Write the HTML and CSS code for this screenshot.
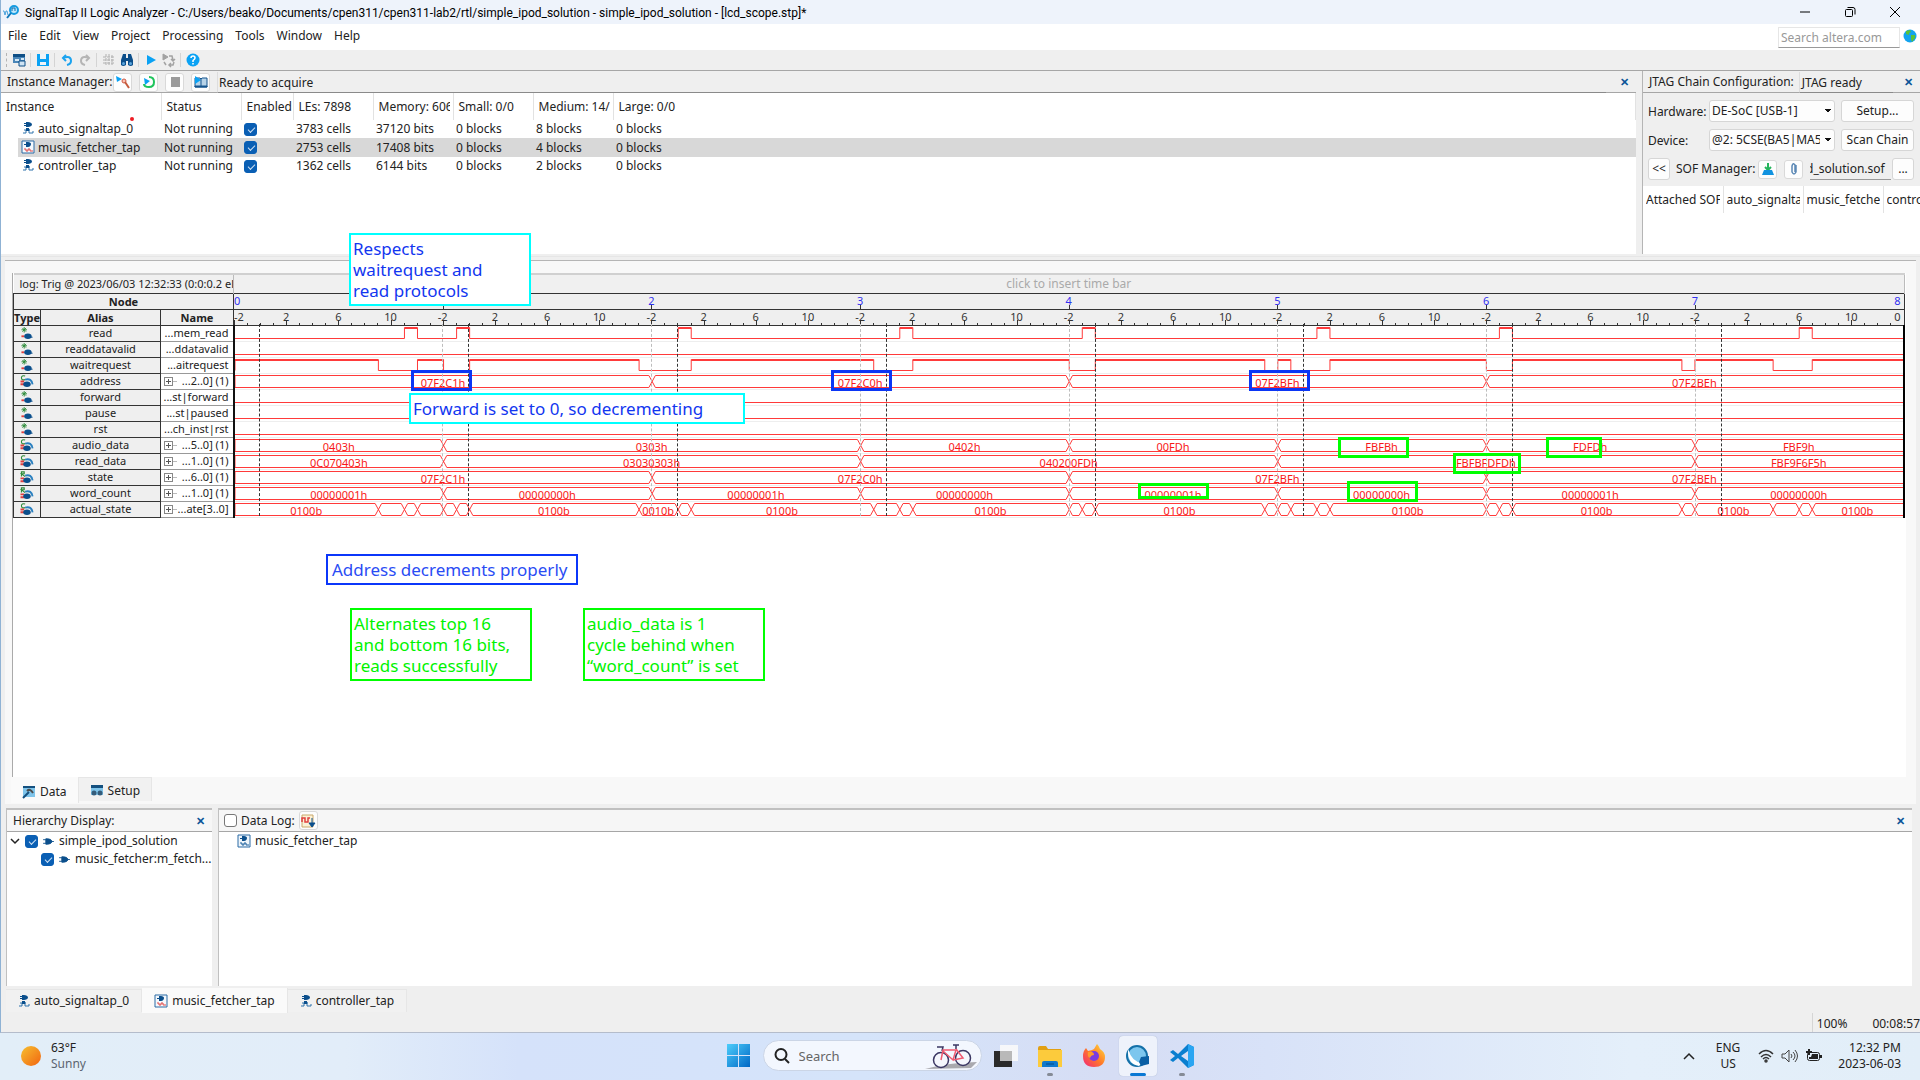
FILE: index.html
```html
<!DOCTYPE html>
<html lang="en">
<head>
<meta charset="utf-8">
<title>SignalTap II Logic Analyzer</title>
<link rel="stylesheet" href="styles.css">
</head>
<body>
<svg class="defs" aria-hidden="true">
  <symbol id="i-tap" viewBox="0 0 12 14"><path d="M4 1h2c2 0 4 1 4 2.500S8 6 6 6H4V5H2V4h2V3H2V2h2z" fill="#0b4f8c"/><path d="M1 12h3V9H2M4 9l4 0M7 8v4h4v-2" fill="none" stroke="#2f72ab" stroke-width="1"/><path d="M4 7h3v3H4z" fill="#0b4f8c"/></symbol>
  <symbol id="i-tapbox" viewBox="0 0 14 14"><path d="M1 1h12v12H1z" fill="#f4f8fc" stroke="#2a6aa5"/><path d="M5 2h2c2 0 3 1 3 2s-1 3-3 3H5V5H3V4h2z" fill="#0b4f8c"/><path d="M3 9h2v2h2V9h2v2h3" fill="none" stroke="#e04848"/></symbol>
  <symbol id="i-tapblue" viewBox="0 0 14 14"><path d="M1 1h12v12H1z" fill="#eef5fb" stroke="#2a6aa5"/><path d="M5 2h2c2 0 3 1 3 2s-1 3-3 3H5V5H3V4h2z" fill="#0b4f8c"/><path d="M3 9h2v2h2V9h2v2h3" fill="none" stroke="#1b5f9b"/></symbol>
  <symbol id="i-node" viewBox="0 0 12 14"><path d="M1 1l4 4M5 1L1 5M3 0v6M0 3h6" stroke="#2e8b3a" stroke-width="1"/><path d="M0 10h3" stroke="#e04040" stroke-width="2"/><ellipse cx="7" cy="10" rx="4" ry="3" fill="#0b4f8c"/><path d="M10 11h2" stroke="#0b4f8c"/></symbol>
  <symbol id="i-bus" viewBox="0 0 14 14"><path d="M5 1Q1 0 1 3t4 2" fill="none" stroke="#2e8b3a" stroke-width="1.200"/><path d="M0 7h4M0 10h4" stroke="#e04040" stroke-width="2"/><ellipse cx="7" cy="10" rx="4" ry="3" fill="#0b4f8c"/><path d="M5 5q7-2 8 5" fill="none" stroke="#2a80c0" stroke-width="2"/></symbol>
  <symbol id="i-reg" viewBox="0 0 14 14"><path d="M1 6V1h3v2H1l4 3" fill="none" stroke="#2e8b3a" stroke-width="1.200"/><path d="M0 8h4M0 11h4" stroke="#e04040" stroke-width="2"/><ellipse cx="7" cy="10" rx="4" ry="3" fill="#0b4f8c"/><path d="M5 5q7-2 8 5" fill="none" stroke="#2a80c0" stroke-width="2"/></symbol>
  <symbol id="i-plug" viewBox="0 0 12 10"><path d="M3 2h2q4 0 5 3-1 3-5 3H3zM0 3h3M0 7h3M10 5h2" fill="#0b4f8c" stroke="#0b4f8c"/></symbol>
</svg>
<div class="app">
  <header class="titlebar">
    <svg width="16" height="14" viewBox="0 0 16 14"><path d="M0 6h1l1 4 1-4h1l1 4" fill="none" stroke="#49a2dc"/><circle cx="11" cy="5" r="4" fill="#bfe7fb" stroke="#169be0" stroke-width="2"/><path d="M9 6V3h3v3" fill="none" stroke="#0b6cb0"/><path d="M8 8l-4 5" stroke="#0f78ba" stroke-width="2"/></svg>
    <h1>SignalTap II Logic Analyzer - C:/Users/beako/Documents/cpen311/cpen311-lab2/rtl/simple_ipod_solution - simple_ipod_solution - [lcd_scope.stp]*</h1>
    <div class="winbtns">
      <button aria-label="Minimize"><svg width="12" height="12"><path d="M1 6h10" stroke="#000"/></svg></button>
      <button aria-label="Restore"><svg width="12" height="12" fill="none" stroke="#000"><rect x="1.500" y="3.500" width="7" height="7" rx="1"/><path d="M3.500 1.500H9q2 0 2 2v5"/></svg></button>
      <button aria-label="Close"><svg width="12" height="12"><path d="M1 1l10 10M11 1L1 11" stroke="#000"/></svg></button>
    </div>
  </header>
  <nav class="menubar">
    <a href="#">File</a><a href="#">Edit</a><a href="#">View</a><a href="#">Project</a><a href="#">Processing</a><a href="#">Tools</a><a href="#">Window</a><a href="#">Help</a>
    <input class="site-search" type="text" placeholder="Search altera.com" aria-label="Search altera.com">
    <svg width="14" height="14" viewBox="0 0 14 14"><circle cx="7" cy="7" r="6.500" fill="#13a3ee"/><path d="M3 2l4-1 1 2-2 1 0 2-3-1zM8 6l4 0 0 3-3 4-1-3z" fill="#5bc236"/></svg>
  </nav>
  <div class="toolbar">
    <i class="grip"></i>
    <button aria-label="Instance"><svg width="14" height="14"><path d="M1 1h12v9H1z" fill="#4a86b8"/><path d="M1 1h12v3H1z" fill="#0f4f86"/><path d="M3 6h4v2H3zM9 5h3v2H9z" fill="#d6e8f5"/><path d="M7 8h6v5H7z" fill="#cfe3f3" stroke="#0f4f86"/></svg></button>
    <i></i>
    <button aria-label="Save"><svg width="14" height="14"><path d="M1 1h12v12H1z" fill="#0aa2f4"/><path d="M4 1h6v5H4zM4 9h6v3H4z" fill="#eef4f8"/></svg></button>
    <i></i>
    <button aria-label="Undo"><svg width="14" height="14" fill="none" stroke="#1ba3ef" stroke-width="2"><path d="M3 5q8-3 8 3 0 3-4 4"/><path d="M6 2L3 5l3 3"/></svg></button>
    <button aria-label="Redo"><svg width="14" height="14" fill="none" stroke="#b5b5b5" stroke-width="2"><path d="M11 5Q3 2 3 8q0 3 4 4"/><path d="M8 2l3 3-3 3"/></svg></button>
    <i></i>
    <button aria-label="Nodes"><svg width="14" height="14" stroke="#b0b0b0"><path d="M1 4h12M1 7h12M1 10h12M4 1v12M7 1v12M10 2v10" fill="none" stroke-dasharray="3 1"/></svg></button>
    <button aria-label="Find"><svg width="14" height="14" fill="#0d4f8b"><path d="M3 1h3v4h2V1h3l2 6v5q-2 2-5 0V8H6v4q-3 2-5 0V7z"/><circle cx="3.500" cy="10.500" r="1.500" fill="#5ba5dc"/><circle cx="10.500" cy="10.500" r="1.500" fill="#5ba5dc"/></svg></button>
    <i></i>
    <button aria-label="Run"><svg width="14" height="14"><path d="M3 2l9 5-9 5z" fill="#0aa2f4"/></svg></button>
    <button aria-label="Analyze"><svg width="14" height="14" fill="none" stroke="#a3a3a3"><path d="M1 1l5 3-5 3z" fill="#a3a3a3"/><path d="M7 3h3l1 4M9 6l2 2 2-2M12 9l-1 3H7M9 10l-2 2 2 2M4 12L2 9" stroke-width="1.500"/></svg></button>
    <i></i>
    <button aria-label="Help"><svg width="14" height="14"><circle cx="7" cy="7" r="6.500" fill="#0aa2f4"/><path d="M5 5q0-2 2-2t2 2q0 1-2 2.500V9M7 10v1.500" fill="none" stroke="#fff" stroke-width="1.500"/></svg></button>
  </div>

  <div class="upper">
    <section class="instances">
      <div class="phead">
        <span>Instance Manager:</span>
        <button class="tb" aria-label="Run analysis"><svg width="14" height="14"><path d="M0 1l6 3-5 3z" fill="#0aa2f4"/><circle cx="8" cy="6" r="2" fill="#f9c0b0" stroke="#cf5a44"/><path d="M9 7l4 6" stroke="#c55a3c" stroke-width="2"/></svg></button>
        <button class="tb" aria-label="Autorun"><svg width="14" height="14"><path d="M7 2q5 0 5 5t-5 5-5-3" fill="none" stroke="#1fc45c" stroke-width="2"/><path d="M2 3l6 3-5 4z" fill="#0aa2f4"/></svg></button>
        <button class="tb" aria-label="Stop" disabled><svg width="14" height="14"><path d="M3 2h9v10H3z" fill="#9b9b9b"/></svg></button>
        <button class="tb" aria-label="Read data"><svg width="14" height="14"><path d="M1 3h5l1 1 1-1h5v9H1z" fill="#b7d3e8" stroke="#14558e"/><path d="M1 11h12v1H1z" fill="#14558e" stroke="#14558e"/><path d="M1 1l6 4-6 4z" fill="#0aa2f4"/><path d="M7 4v8" stroke="#14558e"/></svg></button>
        <span class="sunk grow">Ready to acquire</span>
        <button class="close" aria-label="Close panel">✕</button>
      </div>
      <table class="itable">
        <colgroup><col class="w161"><col class="w80"><col class="w52"><col class="w80"><col class="w80"><col class="w80"><col class="w80"><col></colgroup>
        <thead><tr><th>Instance</th><th>Status</th><th>Enabled</th><th>LEs: 7898</th><th><div>Memory: 606</div></th><th>Small: 0/0</th><th><div>Medium: 14/3</div></th><th>Large: 0/0</th></tr></thead>
        <tbody>
          <tr><td><svg width="12" height="14"><use href="#i-tap"/></svg>auto_signaltap_0</td><td>Not running</td><td><input type="checkbox" checked aria-label="Enable auto_signaltap_0"></td><td>3783 cells</td><td>37120 bits</td><td>0 blocks</td><td>8 blocks</td><td>0 blocks</td></tr>
          <tr class="sel"><td><svg width="14" height="14"><use href="#i-tapbox"/></svg>music_fetcher_tap</td><td>Not running</td><td><input type="checkbox" checked aria-label="Enable music_fetcher_tap"></td><td>2753 cells</td><td>17408 bits</td><td>0 blocks</td><td>4 blocks</td><td>0 blocks</td></tr>
          <tr><td><svg width="12" height="14"><use href="#i-tap"/></svg>controller_tap</td><td>Not running</td><td><input type="checkbox" checked aria-label="Enable controller_tap"></td><td>1362 cells</td><td>6144 bits</td><td>0 blocks</td><td>2 blocks</td><td>0 blocks</td></tr>
        </tbody>
      </table>
    </section>
    <section class="jtag">
      <div class="phead"><span>JTAG Chain Configuration:</span><span class="sunk ready">JTAG ready</span><button class="close" aria-label="Close panel">✕</button></div>
      <div class="jform">
        <label for="hw">Hardware:</label>
        <select id="hw"><option>DE-SoC [USB-1]</option></select>
        <button class="btn">Setup...</button>
        <label for="dev">Device:</label>
        <select id="dev"><option>@2: 5CSE(BA5|MA5)</option></select>
        <button class="btn">Scan Chain</button>
      </div>
      <div class="jsof">
        <button class="btn sq">&lt;&lt;</button>
        <label for="sof">SOF Manager:</label>
        <button class="tb" aria-label="Program"><svg width="14" height="14"><path d="M7 1v6M4 5l3 3 3-3" stroke="#24b45c" stroke-width="2" fill="none"/><path d="M3 8h8l2 5H1z" fill="#1193e0"/></svg></button>
        <button class="tb" aria-label="Attach"><svg width="14" height="14"><path d="M9 3v7q-2 4-4 0V4q1-4 3-1v7" fill="none" stroke="#5b88b5" stroke-width="1.500"/></svg></button>
        <span class="sofname"><input id="sof" type="text" value="d_solution.sof"></span>
        <button class="btn sq">...</button>
      </div>
      <table class="sofs"><thead><tr><th><div>Attached SOF</div></th><th><div>auto_signaltap</div></th><th><div>music_fetcher</div></th><th><div>controller</div></th></tr></thead></table>
    </section>
  </div>

  <main class="scope">
    <div class="viewer">
      <table class="waves">
        <colgroup><col class="c-type"><col class="c-alias"><col class="c-name"><col></colgroup>
        <thead>
          <tr class="log"><td colspan="3">log: Trig @ 2023/06/03 12:32:33 (0:0:0.2 ela</td><td class="hint">click to insert time bar</td></tr>
          <tr class="dark"><th colspan="3">Node</th><td id="segments"></td></tr>
          <tr class="dark"><th>Type</th><th>Alias</th><th>Name</th><td id="ticks"></td></tr>
        </thead>
        <tbody>
          <tr><td><svg width="12" height="14"><use href="#i-node"/></svg></td><td>read</td><td>...mem_read</td><td data-high="13-14 17-18 34-35 51-52 65-66 83-84 97-98 120-121"></td></tr>
          <tr><td><svg width="12" height="14"><use href="#i-node"/></svg></td><td>readdatavalid</td><td>...ddatavalid</td><td data-high=""></td></tr>
          <tr><td><svg width="12" height="14"><use href="#i-node"/></svg></td><td>waitrequest</td><td>...aitrequest</td><td data-high="0-11 14-16 18-31 35-49 52-64 66-79 80-81 84-96 98-111 112-118 121-128"></td></tr>
          <tr class="bus"><td><svg width="14" height="14"><use href="#i-bus"/></svg></td><td>address</td><td>...2..0] (1)</td><td data-bus="0:07F2C1h 32:07F2C0h 64:07F2BFh 96:07F2BEh"></td></tr>
          <tr><td><svg width="12" height="14"><use href="#i-node"/></svg></td><td>forward</td><td>...st|forward</td><td data-high=""></td></tr>
          <tr><td><svg width="12" height="14"><use href="#i-node"/></svg></td><td>pause</td><td>...st|paused</td><td data-high=""></td></tr>
          <tr><td><svg width="12" height="14"><use href="#i-node"/></svg></td><td>rst</td><td>...ch_inst|rst</td><td data-high=""></td></tr>
          <tr class="bus"><td><svg width="14" height="14"><use href="#i-bus"/></svg></td><td>audio_data</td><td>...5..0] (1)</td><td data-bus="0:0403h 16:0303h 48:0402h 64:00FDh 80:FBFBh 96:FDFDh 112:FBF9h"></td></tr>
          <tr class="bus"><td><svg width="14" height="14"><use href="#i-bus"/></svg></td><td>read_data</td><td>...1..0] (1)</td><td data-bus="0:0C070403h 16:03030303h 48:040200FDh 80:FBFBFDFDh 112:FBF9F6F5h"></td></tr>
          <tr class="bus"><td><svg width="14" height="14"><use href="#i-reg"/></svg></td><td>state</td><td>...6..0] (1)</td><td data-bus="0:07F2C1h 32:07F2C0h 64:07F2BFh 96:07F2BEh"></td></tr>
          <tr class="bus"><td><svg width="14" height="14"><use href="#i-reg"/></svg></td><td>word_count</td><td>...1..0] (1)</td><td data-bus="0:00000001h 16:00000000h 32:00000001h 48:00000000h 64:00000001h 80:00000000h 96:00000001h 112:00000000h"></td></tr>
          <tr class="bus"><td><svg width="14" height="14"><use href="#i-bus"/></svg></td><td>actual_state</td><td>...ate[3..0]</td><td data-bus="0:0100b 11: 13: 14: 16: 17: 18:0100b 31:0010b 34: 35:0100b 49: 51: 52:0100b 64: 65: 66:0100b 79: 80: 81: 83: 84:0100b 96: 97: 98:0100b 111: 112:0100b 118: 120: 121:0100b"></td></tr>
        </tbody>
      </table>
      <div class="bars" id="bars"></div>
    </div>
    <div class="tabs">
      <button class="tab on"><svg width="14" height="14"><path d="M1 1h12v11H1z" fill="#7fc4ea"/><path d="M1 1h12v2H1z" fill="#14507f"/><path d="M1 13l6-6" stroke="#14507f" stroke-width="2"/><path d="M5 6q3-3 6 2" fill="none" stroke="#4d4d4d" stroke-width="2"/></svg>Data</button>
      <button class="tab"><svg width="14" height="14"><path d="M1 2h12v9H1z" fill="#7fc4ea"/><path d="M1 1h12v3H1z" fill="#14507f"/><circle cx="4" cy="9" r="2.500" fill="#355c7a"/><circle cx="10" cy="9" r="2.500" fill="#355c7a"/></svg>Setup</button>
    </div>
  </main>

  <div class="lower">
    <section class="hier">
      <div class="phead"><span class="grow">Hierarchy Display:</span><button class="close" aria-label="Close panel">✕</button></div>
      <ul class="tree">
        <li><svg width="10" height="10"><path d="M1 3l4 4 4-4" fill="none" stroke="#222" stroke-width="1.500"/></svg><input type="checkbox" id="h1" checked><svg width="11" height="9"><use href="#i-plug"/></svg><label for="h1">simple_ipod_solution</label></li>
        <li class="child"><input type="checkbox" id="h2" checked><svg width="11" height="9"><use href="#i-plug"/></svg><label for="h2">music_fetcher:m_fetch...</label></li>
      </ul>
    </section>
    <section class="dlog">
      <div class="phead"><input type="checkbox" id="dl"><label for="dl">Data Log:</label>
        <button class="tb" aria-label="Log"><svg width="14" height="14"><path d="M1 1h11v12H1z" fill="#fbf1d6" stroke="#c9a86a"/><path d="M1 8V4h3v4h3V4h2" fill="none" stroke="#e04040" stroke-width="1.500"/><path d="M11 4v6M8 9l3 4 3-4z" stroke="#0b4f8c" fill="#0b4f8c"/></svg></button>
        <span class="grow"></span><button class="close" aria-label="Close panel">✕</button></div>
      <ul class="tree log-tree"><li><svg width="14" height="14"><use href="#i-tapblue"/></svg><span>music_fetcher_tap</span></li></ul>
    </section>
  </div>
  <div class="tabs filetabs">
    <button class="tab"><svg width="12" height="14"><use href="#i-tap"/></svg>auto_signaltap_0</button>
    <button class="tab on"><svg width="14" height="14"><use href="#i-tapbox"/></svg>music_fetcher_tap</button>
    <button class="tab"><svg width="12" height="14"><use href="#i-tap"/></svg>controller_tap</button>
  </div>
  <footer class="status"><span class="pct">100%</span><span>00:08:57</span></footer>

  <i class="dot"></i>
  <p class="note cyan n1">Respects<br>waitrequest and<br>read protocols</p>
  <p class="note cyan n2">Forward is set to 0, so decrementing</p>
  <p class="note blue n3">Address decrements properly</p>
  <p class="note green n4">Alternates top 16<br>and bottom 16 bits,<br>reads successfully</p>
  <p class="note green n5">audio_data is 1<br>cycle behind when<br>“word_count” is set</p>
  <i class="mark m1"></i><i class="mark m2"></i><i class="mark m3"></i>
  <i class="mark g g1"></i><i class="mark g g2"></i><i class="mark g g3"></i><i class="mark g g4"></i><i class="mark g g5"></i>
</div>

<div class="taskbar">
  <div class="weather">
    <svg width="20" height="20"><defs><linearGradient id="sun" x1="0" y1="0" x2="1" y2="1"><stop offset="0" stop-color="#f6c030"/><stop offset="1" stop-color="#f26410"/></linearGradient></defs><circle cx="10" cy="10" r="10" fill="url(#sun)"/></svg>
    <p>63°F<br><span>Sunny</span></p>
  </div>
  <div class="dock">
    <button aria-label="Start"><svg width="24" height="24"><defs><linearGradient id="win" x1="0" y1="0" x2="1" y2="1"><stop offset="0" stop-color="#4ccdfb"/><stop offset="1" stop-color="#0067c5"/></linearGradient></defs><path d="M0 0h11v11H0zM12 0h11v11H12zM0 12h11v11H0zM12 12h11v11H12z" fill="url(#win)"/></svg></button>
    <div class="search">
      <svg width="16" height="16" fill="none" stroke="#222" stroke-width="2"><circle cx="7" cy="6.500" r="5.500"/><path d="M11 11l4 4"/></svg>
      <input type="text" placeholder="Search" aria-label="Search">
      <svg width="54" height="28" viewBox="0 0 54 28"><path d="M0 27q20-6 52-7l-6 6z" fill="#a9a9ae"/><g fill="none" stroke="#3b3763" stroke-width="1.500"><circle cx="16" cy="18" r="7.500" fill="#f5f7fd"/><circle cx="38" cy="16" r="7.500" fill="#f5f7fd"/><path d="M12 5h6l-1 4M28 3h6M31 3v4"/></g><path d="M16 18l2-10h13l-3 10L18 9M31 7l7 9-10 2" fill="none" stroke="#f05a70" stroke-width="1.500"/></svg>
    </div>
    <button aria-label="Task view"><svg width="24" height="24"><path d="M0 7h18v16H0z" fill="#2a2a2a"/><path d="M6 1h18v16H6z" fill="#fafafa" fill-opacity=".9"/><path d="M6 7h12v10H6z" fill="#b9b9b9"/></svg></button>
    <button aria-label="File Explorer" class="run"><svg width="24" height="24"><path d="M0 4q0-2 2-2h6l2 3h13v18H0z" fill="#e2a012"/><path d="M0 6h24v17H0z" fill="#fccb3c"/><path d="M4 23v-4q0-2 2-2h12q2 0 2 2v4z" fill="#0f78cc"/><path d="M8 20h8" stroke="#064a86"/></svg></button>
    <button aria-label="Firefox"><svg width="24" height="24"><defs><linearGradient id="ff" x1="1" y1="0" x2="0" y2="1"><stop offset="0" stop-color="#ffe23c"/><stop offset=".5" stop-color="#ff7a28"/><stop offset="1" stop-color="#f2247c"/></linearGradient></defs><path d="M4 4l2 3 4-1 2-1 3-5q2 2 3 5 5 3 5 8 0 10-11 10Q1 23 1 12q0-5 3-8z" fill="url(#ff)"/><circle cx="12" cy="12" r="5" fill="#7a3ce0"/><path d="M6 8q6-1 6 3-3 0-4 3-3-1-2-6z" fill="#ff9a2c"/></svg></button>
    <button aria-label="SignalTap" class="run on"><svg width="24" height="24"><circle cx="11" cy="12" r="10" fill="#7cc6ee" stroke="#1470a8" stroke-width="2"/><path d="M2 5q4 13 14 14l-3 3Q1 20 2 5z" fill="#fff"/><path d="M15 13l8-1v8l-8 2-2-4z" fill="#0a5fa4"/></svg></button>
    <button aria-label="VS Code" class="run"><svg width="24" height="24"><path d="M18 0l6 3v18l-6 3L8 14l-5 4-3-2 5-4-5-4 3-2 5 4zM18 7l-7 5 7 5z" fill="#0a7fd0" fill-rule="evenodd"/><path d="M18 0l6 3v18l-6 3z" fill="#2aa5f2"/></svg></button>
  </div>
  <div class="tray">
    <svg width="12" height="8"><path d="M1 7l5-5 5 5" fill="none" stroke="#222" stroke-width="1.500"/></svg>
    <p class="lang">ENG<br>US</p>
    <div class="icons">
      <svg width="16" height="14" fill="none" stroke="#333" stroke-width="1.500"><path d="M1 5q7-7 14 0M3 8q5-5 10 0M5 10q3-3 6 0"/><circle cx="8" cy="12" r="1"/></svg>
      <svg width="17" height="14" fill="none" stroke="#444"><path d="M1 5h3l4-4v12L4 9H1zM10 5q2 2 0 4M12 3q4 4 0 8M14 1q5 6 0 12"/></svg>
      <svg width="17" height="14"><rect x="2.500" y="3.500" width="12" height="8" rx="2" fill="none" stroke="#222"/><path d="M7 5h6v5H4V8h2zM15 6h2v3h-2z" fill="#222"/><path d="M4 0v6M1 3h6" stroke="#222" stroke-width="2"/></svg>
    </div>
    <p class="clock">12:32 PM<br>2023-06-03</p>
  </div>
</div>
<script src="app.js"></script>
</body>
</html>
```
FILE: styles.css
```css
* { box-sizing: border-box; }
body { margin: 0; height: 100vh; display: flex; flex-direction: column; overflow: hidden; font: 12px/18px "Noto Sans", "Open Sans", sans-serif; color: #222; background: #efefef; }
button, input, select { font: inherit; color: inherit; margin: 0; }
button { border: 0; padding: 0; background: none; white-space: nowrap; }
p, h1, ul { margin: 0; padding: 0; }
svg { display: block; flex: none; overflow: visible; }
table { border-collapse: collapse; table-layout: fixed; width: 100%; }
.defs { position: absolute; width: 0; height: 0; }
.app { position: relative; flex: 1; min-height: 0; display: flex; flex-direction: column; border-left: 1px solid #8fb2d4; border-bottom: 1px solid #b4bccb; }
.grow { flex: 1; }

.titlebar { height: 24px; flex: none; display: flex; align-items: center; gap: 6px; padding: 0 3px 0 2px; background: #eef3fb; }
.titlebar h1 { flex: 1; font: 400 12px/18px Roboto, "Noto Sans", sans-serif; color: #000; white-space: nowrap; padding-top: 2px; }
.winbtns { display: flex; }
.winbtns button { width: 45px; display: flex; justify-content: center; }

.menubar { height: 26px; flex: none; display: flex; align-items: center; gap: 12px; padding: 0 3px 3px 7px; background: #fff; }
.menubar a { color: inherit; text-decoration: none; }
.site-search { margin-left: auto; width: 122px; height: 21px; margin-top: 3px; padding: 0 2px; border: 1px solid #e6e6e6; border-bottom-color: #999; background: #fff; }
.site-search::placeholder { color: #999; }
.site-search + svg { margin: 1px 0 0 -9px; }

.toolbar { height: 21px; flex: none; display: flex; align-items: center; gap: 4px; padding-left: 5px; border-bottom: 1px solid #a6a6a6; }
.toolbar i { width: 2px; height: 14px; border-left: 1px solid #d4d4d4; }
.toolbar .grip { border-left: 1px dashed #b4b4b4; }

.upper { height: 186px; flex: none; display: flex; gap: 6px; border-bottom: 1px solid #e6e6e6; }
.instances { flex: 1; min-width: 0; margin-bottom: 2px; background: #fff; }
.phead { height: 22px; display: flex; align-items: center; padding-left: 6px; border-bottom: 1px solid #a6a6a6; background: #efefef; white-space: nowrap; }
.upper .phead { padding-top: 1px; }
.tb { width: 19px; height: 19px; border: 1px solid #d9d9d9; border-radius: 3px; background: #fdfdfd; display: grid; place-items: center; }
.instances .phead { gap: 7px; }
.instances .phead > span:first-child { width: 99px; }
.sunk { border-left: 1px solid #ddd; border-bottom: 1px solid #8a8a8a; height: 21px; line-height: 22px; padding-left: 1px; }
.close { width: 23px; color: #0b5598; font-size: 11px; text-align: center; font-weight: 700; }
.ready { width: 94px; margin: 0 4px 0 5px; padding-left: 2px; }

.itable th, .itable td { text-align: left; font-weight: 400; white-space: nowrap; padding: 0; overflow: hidden; }
.itable th { height: 27px; padding-left: 5px; border-right: 1px solid #e2e2e2; }
.itable th div { overflow: hidden; margin-right: 3px; }
.itable td { height: 18px; padding-left: 3px; line-height: 18px; }
.itable .sel td { height: 19px; }
.itable td:first-child { padding-left: 20px; }
.itable td:first-child svg { display: inline-block; width: 14px; vertical-align: -2px; margin-right: 3px; }
.itable .sel { background: linear-gradient(90deg, #fff 17px, #d8d8d8 17px); }
.w161 { width: 160px; } .w80 { width: 80px; } .w52 { width: 52px; }
input[type=checkbox] { appearance: none; width: 13px; height: 13px; border: 1px solid #777; border-radius: 3px; background: #fff; flex: none; display: block; }
input[type=checkbox]:checked { border-color: #0a5fb4; background: #0a5fb4; }
input[type=checkbox]:checked::after { content: ""; display: block; width: 6px; height: 3px; margin: 3px 0 0 3px; border: solid #cfe2f5; border-width: 0 0 1px 1px; transform: rotate(-45deg); }

.jtag { width: 278px; border-left: 1px solid #b5b5b5; margin-bottom: 2px; display: flex; flex-direction: column; background: linear-gradient(#efefef 120px, #fff 120px); }
.jform { display: grid; grid-template-columns: 55px 126px 73px; gap: 7px 6px; padding: 7px 0 6px 5px; }
.btn, select { height: 22px; border: 1px solid #d6d6d6; border-radius: 3px; background: #fdfdfd; white-space: nowrap; }
select { appearance: none; padding: 0 14px 0 2px; overflow: hidden; background-image: linear-gradient(135deg, #111 50%, transparent 0), linear-gradient(225deg, #111 50%, transparent 0); background-size: 3px 4px, 3px 4px; background-position: 118px 8px, 115px 8px; background-repeat: no-repeat; background-color: #fdfdfd; }
.jform label { line-height: 24px; height: 22px; white-space: nowrap; }
.jsof { display: flex; align-items: center; padding: 1px 6px 6px 5px; }
.jsof label { width: 82px; margin-left: 6px; white-space: nowrap; }
.jsof .tb + .tb { margin: 0 7px; }
.sq { width: 22px; flex: none; }
.sofname { flex: 1; min-width: 0; display: flex; overflow: hidden; margin-right: 1px; border-bottom: 1px solid #999; }
.sofname input { flex: 1; min-width: 84px; height: 20px; border: 0; padding: 0; margin-left: -4px; background: #efefef; text-align: left; }
.sofs { background: #fff; }
.sofs th { width: 80px; height: 27px; font-weight: 400; text-align: left; white-space: nowrap; padding: 0 3px; border-right: 1px solid #e2e2e2; }
.sofs div { overflow: hidden; }

.scope { flex: 1; min-height: 0; display: flex; flex-direction: column; margin: 3px 4px 4px; padding: 12px 0 0 7px; border-top: 1px solid #b5b5b5; background: #f8f8f8; }
.viewer { position: relative; flex: 1; margin-right: 10px; background: #fff; border-left: 1px solid #aaa; }
.viewer .waves { width: calc(100% - 1px); font-size: 11px; line-height: 14px; text-align: center; }
.c-type { width: 27px; } .c-alias { width: 120px; } .c-name { width: 73px; }
.waves td, .waves th { padding: 0; height: 16px; white-space: nowrap; overflow: hidden; }
.waves .log td { height: 19px; background: #f0f0f0; border-top: 2px solid #d0d0d0; text-align: left; padding-left: 6px; border-right: 1px solid #bbb; }
.waves .log .hint { text-align: center; color: #aaa; font-size: 12px; padding-left: 0; }
.dark th, .dark td { background: #efefef; border: 1px solid #333; position: relative; }
.dark th { font-weight: 700; line-height: 13px; }
.waves tbody td { border: 1px solid #555; }
.waves tbody td:nth-child(-n+2) { background: #efefef; border-color: #333; }
.waves tbody td:nth-child(3) { border-color: #999 #111 #999 #333; border-right-width: 2px; text-align: right; padding-right: 4px; }
.waves tbody .bus td:nth-child(3) { background: linear-gradient(#555, #555) 5px 7px / 5px 1px no-repeat, linear-gradient(#555, #555) 7px 5px / 1px 5px no-repeat, linear-gradient(#fff, #fff) 4px 4px / 7px 7px no-repeat, linear-gradient(#888, #888) 3px 3px / 9px 9px no-repeat, linear-gradient(#bbb, #bbb) 12px 7px / 4px 1px no-repeat; }
.waves tbody td:nth-child(4) { border: 0; border-bottom: 1px solid #eee; border-right: 2px solid #000; }
.waves tbody td:first-child svg { margin: 0 auto; height: 13px; }
.track { position: relative; height: 15px; }
.track svg { width: 100%; height: 15px; position: absolute; inset: 0; overflow: hidden; }
.track path { fill: none; stroke: #ff3a3a; vector-effect: non-scaling-stroke; }
.track span, .scale span { position: absolute; transform: translateX(-50%); }
.track span { color: #f81818; top: 2px; line-height: 13px; }
.scale { position: relative; height: 14px; color: #333; }
.scale span { top: 0; line-height: 13px; }
.scale i { position: absolute; bottom: -1px; width: 1px; height: 2px; background: #333; }
.scale i.long { height: 5px; }
#segments span { color: #3030f0; }
#segments i { height: 4px; }
.scale .first { transform: none; }
.scale .last { transform: translateX(calc(-100% - 3px)); }
.bars { position: absolute; left: 220px; right: 2px; top: 51px; height: 192px; pointer-events: none; }
.bars i { position: absolute; top: 0; bottom: 0; border-left: 1px dashed #bdbdbd; }
.bars i.zero { border-color: #333; }

.tabs { display: flex; flex: none; }
.tab { display: flex; align-items: center; gap: 4px; height: 24px; background: #f1f1f1; border: solid #e6e6e6; border-width: 1px 1px 0 0; padding: 0 11px; }
.tab.on { background: #fafafa; border-width: 0 1px 0 0; height: 26px; }
.scope .tabs { height: 27px; }
.scope .tab { padding-top: 2px; }
.scope .tab.on { padding: 4px 11px 0 11px; margin-left: -1px; }

.lower { height: 178px; flex: none; display: flex; gap: 6px; padding: 0 8px 0 5px; }
.lower section { border: solid #c0c0c0; border-width: 2px 0 0 1px; background: #fff; }
.lower .phead { background: #f6f6f6; height: 22px; }
.hier { width: 206px; }
.hier .phead { padding-left: 6px; }
.dlog { flex: 1; }
.dlog .phead { padding-left: 5px; gap: 4px; }
.tree { list-style: none; padding: 0 0 0 3px; }
.tree li { display: flex; align-items: center; height: 18px; gap: 5px; white-space: nowrap; }
.tree .child { padding-left: 31px; }
.log-tree { padding-left: 18px; }
.log-tree li { gap: 4px; }
.filetabs { height: 25px; margin: 2px 0 0 5px; }
.filetabs .tab { padding: 0 12px; height: 23px; margin-top: 1px; }
.filetabs .tab.on { height: 25px; margin-top: 0; }
.status { height: 19px; line-height: 22px; flex: none; display: flex; justify-content: flex-end; gap: 25px; white-space: nowrap; }
.status .pct { border-left: 1px solid #d5d5d5; padding-left: 4px; }

.dot { position: absolute; left: 129px; top: 117px; width: 4px; height: 4px; border-radius: 2px; background: #ee1c24; }
.note { position: absolute; font-size: 17px; line-height: 21px; padding: 3px 2px; border: 2px solid; background: #fff; white-space: nowrap; }
.cyan { border-color: #0ff; color: #1236f0; }
.blue { border-color: #0b36fa; color: #2a4cf4; }
.green { border-color: #0f0; color: #00f200; }
.n1 { left: 348px; top: 233px; width: 182px; height: 73px; }
.n2 { left: 408px; top: 393px; width: 336px; height: 31px; }
.n3 { left: 325px; top: 554px; width: 252px; height: 31px; padding-left: 4px; }
.n4 { left: 349px; top: 608px; width: 182px; height: 73px; }
.n5 { left: 582px; top: 608px; width: 182px; height: 73px; }
.mark { position: absolute; border: 3px solid #0b36f5; width: 61px; height: 21px; top: 370px; }
.m1 { left: 410px; } .m2 { left: 830px; } .m3 { left: 1248px; }
.g { border-color: #0f0; width: 71px; }
.g1 { left: 1337px; top: 437px; } .g2 { left: 1545px; top: 437px; width: 56px; } .g3 { left: 1452px; top: 453px; width: 68px; }
.g4 { left: 1137px; top: 483px; height: 16px; } .g5 { left: 1346px; top: 481px; }

.taskbar { height: 47px; flex: none; display: grid; grid-template-columns: 1fr auto 1fr; align-items: center; padding-bottom: 2px; background: linear-gradient(90deg, #e2eef8, #e2edf9 18%, #d5e2fa 27%, #d5e4fa 45%, #d6ddf4 58%, #d8e2f8 66%, #e4effa 85%, #e2eef8); line-height: 16px; }
.weather { display: flex; align-items: center; gap: 10px; padding-left: 21px; }
.weather span { color: #5b6470; }
.dock { display: flex; align-items: center; height: 45px; }
.dock button { position: relative; width: 44px; height: 40px; display: grid; place-items: center; }
.dock .on { width: 38px; margin: 0 3px; border-radius: 4px; background: #eef2fb; box-shadow: 0 0 1px #9aa8c0; }
.dock .run::after { content: ""; position: absolute; bottom: 0; left: calc(50% - 3px); width: 6px; height: 3px; border-radius: 2px; background: #858b96; }
.dock .on::after { left: calc(50% - 8px); width: 16px; background: #0a78d4; }
.search { width: 219px; height: 31px; margin: 0 2px; border: 1px solid #cbd5e6; border-radius: 16px; background: #f3f7fe; display: flex; align-items: center; gap: 9px; padding: 0 2px 0 10px; }
.search input { flex: 1; min-width: 0; border: 0; background: none; outline: 0; padding: 0; font-size: 13px; }
.search input::placeholder { color: #666; }
.tray { display: flex; align-items: center; justify-content: flex-end; gap: 21px; padding-right: 19px; text-align: center; }
.icons { display: flex; gap: 7px; margin-left: -3px; }
.clock { text-align: right; margin-left: -5px; }
```
FILE: app.js
```js
const SPAN = 128;
const at = u => (u / SPAN * 100) + '%';

function add(parent, tag, cls, u, text) {
  const el = document.createElement(tag);
  if (cls) el.className = cls;
  el.style.left = at(u);
  if (text) el.textContent = text;
  parent.append(el);
}

function track(cell, paths, labels) {
  const svg = '<svg viewBox="0 0 128 15" preserveAspectRatio="none">' + paths.map(d => `<path d="${d}"/>`).join('') + '</svg>';
  cell.innerHTML = `<div class="track">${svg}</div>`;
  labels.forEach(([u, t]) => add(cell.firstChild, 'span', '', u, t));
}

document.querySelectorAll('[data-high]').forEach(cell => {
  let d = 'M0 12.5', top = '';
  cell.dataset.high.split(' ').filter(Boolean).forEach(r => {
    const [a, b] = r.split('-');
    d += `H${a}V1.5H${b}V12.5`;
    top += `M${a} 2.5H${b}`;
  });
  if (!cell.dataset.high.endsWith('128')) d += 'H128';
  track(cell, [d, top], []);
});

document.querySelectorAll('[data-bus]').forEach(cell => {
  const items = cell.dataset.bus.split(' ').map(s => s.split(':'));
  const paths = [], labels = [];
  items.forEach(([s, text], i) => {
    const a = +s, b = i + 1 < items.length ? +items[i + 1][0] : SPAN;
    const l = i ? 0.25 : 0, r = b < SPAN ? 0.25 : 0;
    paths.push(`M${a - l} 13.5L${a + l} 1.5H${b - r}L${b + r} 13.5`);
    paths.push(`M${a + l} 13.5H${b - r}`);
    if (text) labels.push([(a + b) / 2, text]);
  });
  track(cell, paths, labels);
});

const seg = document.getElementById('segments');
const ticks = document.getElementById('ticks');
seg.innerHTML = ticks.innerHTML = '<div class="scale"></div>';
for (let k = 0; k <= 8; k++) {
  const cls = k === 0 ? 'first' : k === 8 ? 'last' : '';
  // Segment 1 has no number: the first note lies over it.
  if (k !== 1) add(seg.firstChild, 'span', cls, k * 16, String(k));
  if (k) add(seg.firstChild, 'i', '', k * 16);
}
for (let u = 0; u < SPAN; u++) {
  const k = u % 16;
  if (k % 4 === 0) add(ticks.firstChild, 'span', u ? '' : 'first', u, k ? String(k - 2) : '-2');
  add(ticks.firstChild, 'i', k % 4 ? '' : 'long', u);
}
add(ticks.firstChild, 'span', 'last', SPAN, '0');

const bars = document.getElementById('bars');
for (let u = 16; u < SPAN; u += 16) add(bars, 'i', '', u);
for (let u = 2; u < SPAN; u += 16) add(bars, 'i', 'zero', u);
```
